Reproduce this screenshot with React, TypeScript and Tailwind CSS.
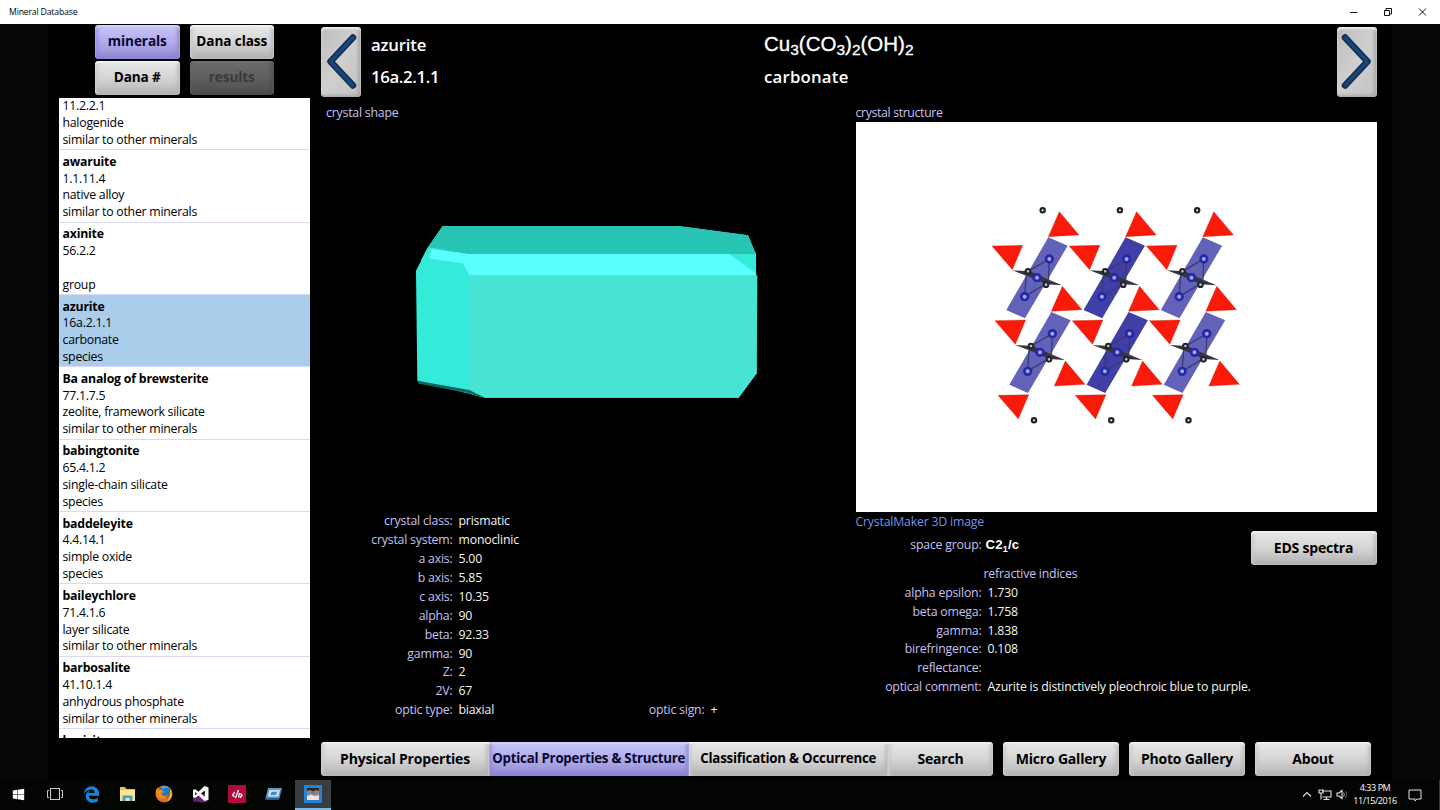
import React from 'react';
import { FaEdgeLegacy, FaWindows } from 'react-icons/fa6';

interface Mineral {
  name: string;
  dana: string;
  group: string;
  kind: string;
}

// The list is scrolled, so the first entry starts at its Dana number
const MINERALS: Mineral[] = [
  { name: '', dana: '11.2.2.1', group: 'halogenide', kind: 'similar to other minerals' },
  { name: 'awaruite', dana: '1.1.11.4', group: 'native alloy', kind: 'similar to other minerals' },
  { name: 'axinite', dana: '56.2.2', group: '', kind: 'group' },
  { name: 'azurite', dana: '16a.2.1.1', group: 'carbonate', kind: 'species' },
  { name: 'Ba analog of brewsterite', dana: '77.1.7.5', group: 'zeolite, framework silicate', kind: 'similar to other minerals' },
  { name: 'babingtonite', dana: '65.4.1.2', group: 'single-chain silicate', kind: 'species' },
  { name: 'baddeleyite', dana: '4.4.14.1', group: 'simple oxide', kind: 'species' },
  { name: 'baileychlore', dana: '71.4.1.6', group: 'layer silicate', kind: 'similar to other minerals' },
  { name: 'barbosalite', dana: '41.10.1.4', group: 'anhydrous phosphate', kind: 'similar to other minerals' },
  { name: 'baricite', dana: '', group: '', kind: '' },
];

const CRYSTAL_ROWS: [string, string][] = [
  ['crystal class:', 'prismatic'],
  ['crystal system:', 'monoclinic'],
  ['a axis:', '5.00'],
  ['b axis:', '5.85'],
  ['c axis:', '10.35'],
  ['alpha:', '90'],
  ['beta:', '92.33'],
  ['gamma:', '90'],
  ['Z:', '2'],
  ['2V:', '67'],
  ['optic type:', 'biaxial'],
];

const OPTIC_ROWS: [string, string][] = [
  ['alpha epsilon:', '1.730'],
  ['beta omega:', '1.758'],
  ['gamma:', '1.838'],
  ['birefringence:', '0.108'],
  ['reflectance:', ''],
  ['optical comment:', 'Azurite is distinctively pleochroic blue to purple.'],
];

const BUTTON_TONES = {
  normal: 'bg-linear-to-b from-[#e9e9e9] via-[#d5d5d5] to-[#b2b2b2] text-black shadow-[inset_0_2px_2px_#f4f4f4,inset_2px_0_4px_#c4c4c4,inset_-2px_-2px_4px_#adadad]',
  active: 'bg-linear-to-b from-[#c9c6f6] via-[#b0acef] to-[#908cc9] text-[#07062a] shadow-[inset_0_2px_2px_#d6d4fb,inset_2px_-2px_5px_#8c83ea,inset_-2px_-2px_4px_#8783bd]',
  disabled: 'bg-linear-to-b from-[#6c6c6c] via-[#5f5f5f] to-[#4c4c4c] text-[#3a3a3a] shadow-[inset_0_1px_2px_#757575,inset_-2px_-2px_4px_#484848]',
};

interface BevelButtonProps {
  label: string;
  tone?: keyof typeof BUTTON_TONES;
  className?: string;
}

const BevelButton: React.FC<BevelButtonProps> = ({ label, tone = 'normal', className = '' }) => (
  <button type="button" className={`flex h-[34px] items-center justify-center whitespace-nowrap pb-px font-bold ${BUTTON_TONES[tone]} ${className}`}>
    {label}
  </button>
);

const ArrowButton: React.FC<{ direction: 'left' | 'right' }> = ({ direction }) => (
  <button
    type="button"
    aria-label={direction === 'left' ? 'previous' : 'next'}
    className="h-[70px] w-10 rounded-[4px] bg-linear-to-br from-[#bdbdbd] via-[#cfcfcf] to-[#c2c2c2] shadow-[inset_0_2px_2px_#ececec,inset_-3px_-2px_3px_#a9a9a9]"
  >
    <svg viewBox="0 0 40 70" className={direction === 'left' ? 'h-full w-full' : 'h-full w-full -scale-x-100'} fill="none" strokeLinecap="round" strokeLinejoin="round">
      <path d="M32 10.500 L9.500 34.500 L32 58.500" stroke="#0f2c4d" strokeWidth="6.5" />
      <path d="M32 10.500 L9.500 34.500 L32 58.500" stroke="#194676" strokeWidth="3.5" />
    </svg>
  </button>
);

const CrystalShape = () => (
  <svg width="370" height="200" viewBox="0 0 1110 600">
    <path d="M128 48 L835 48 L1044 76 L1068 132 L1070 490 L1016 563 L255 563 L52 512 L48 182 L84 112 Z" fill="#34ebd9" />
    <path d="M128 48 L835 48 L1044 76 L1066 132 L205 132 L84 112 Z" fill="#28c5b5" />
    <path d="M94 117 L205 132 L987 132 L1068 190 L1068 196 L208 196 L188 160 L88 146 Z" fill="#59ffff" />
    <path d="M84 112 L94 117 L88 146 L62 152 Z" fill="#34ebd9" />
    <path d="M208 196 L1072 196 L1070 490 L1016 563 L255 563 L208 540 Z" fill="#47e3d5" />
    <path d="M52 512 L208 540 L255 563 L200 548 L56 521 Z" fill="#0f6660" />
  </svg>
);

const COLUMNS = [0, 1, 2];

const CrystalStructure = () => (
  <svg width="270" height="235" viewBox="0 0 810 705">
    {COLUMNS.map((col) => (
      <g key={col} transform={`translate(${col * 231.7} 0)`}>
        {[0, 1].map((row) => (
          <g key={row} transform={`translate(${row * 9} ${row * 224})`}>
            <path d="M205 127 L263 152 L135 370 L79 345 Z" fill={col === 1 ? '#3f3fa5' : '#6262b8'} />
            <path d="M97 226 L150 229 L180 243 L246 271 L198 268 L165 252 Z" fill="#34343e" />
            <path d="M144 229 L208 192 L205 262 L134 305 L139 232" fill="none" stroke="#3b3b72" strokeWidth="4" />
            {[[208, 192], [171, 248], [134, 305]].map(([x, y]) => (
              <circle key={y} cx={x} cy={y} r="10" fill="#a5a5ea" stroke="#2727a8" strokeWidth="8" />
            ))}
            {[[144, 229], [198, 269]].map(([x, y]) => (
              <circle key={y} cx={x} cy={y} r="7" fill="#bfbfbf" stroke="#22222a" strokeWidth="6" />
            ))}
          </g>
        ))}
        {[0, 1, 2].map((row) => (
          <g key={row} transform={`translate(${row * 9} ${row * 224})`} fill="#fa1a0a" stroke="#c21a10" strokeWidth="1">
            <path d="M238 50 L297 120 L205 125 Z" />
            <path d="M36 153 L128 151 L97 224 Z" />
          </g>
        ))}
        <circle cx="188" cy="46" r="6.5" fill="#eee" stroke="#222" strokeWidth="6.5" />
        <circle cx="162" cy="676" r="6.5" fill="#eee" stroke="#222" strokeWidth="6.5" />
      </g>
    ))}
  </svg>
);

const DataRow: React.FC<{ label: string; value: string }> = ({ label, value }) => (
  <div className="flex h-[18.9px] items-center gap-1.5 pt-px leading-none">
    <span className="w-[131.5px] shrink-0 whitespace-nowrap text-right text-[#c6c0f2]">{label}</span>
    <span className="whitespace-nowrap text-[#f4f4f4]">{value}</span>
  </div>
);

const MineralList = () => (
  <div className="ml-[10.5px] mt-[2.5px] h-[640.5px] w-[251.5px] overflow-hidden bg-white text-[12.3px] tracking-[-0.25px] text-black">
    <div className="-mt-[19.5px]">
      {MINERALS.map((m) => (
        <div
          key={m.dana}
          className={`h-[72.35px] border-b-[1.5px] border-[#dad8f8] pl-1 pt-[3.5px] leading-[16.8px] ${m.name === 'azurite' ? 'bg-[#abcdec]' : ''}`}
        >
          <p className="h-[16.8px] font-bold tracking-[-0.2px]">{m.name}</p>
          <p className="h-[16.8px]">{m.dana}</p>
          <p className="h-[16.8px]">{m.group}</p>
          <p className="h-[16.8px]">{m.kind}</p>
        </div>
      ))}
    </div>
  </div>
);

const FirefoxIcon = () => (
  <svg width="18" height="18" viewBox="0 0 18 18">
    <circle cx="9" cy="9" r="8.5" fill="#e66a1a" />
    <circle cx="9.2" cy="7" r="6.2" fill="#2877b8" />
    <path d="M6 1.500 C9 .2 13 1 15 4 C12 2 9 3 7.500 4 Z" fill="#57b4dc" />
    <path d="M1 5 L2.500 2.500 L4 4.500 L7 5 L9 7 L6.500 8.500 C7 11 10 12 13 10 C11 14 6 15 3 12 C1 10 .5 7 1 5 Z" fill="#f18820" />
    <path d="M15 4 C18 8 17 14 12 17 C15 13 15.500 9 15 4 Z" fill="#fbc72e" />
  </svg>
);

const ExplorerIcon = () => (
  <svg width="17" height="16" viewBox="0 0 17 16">
    <path d="M1 1 H6 L7.500 3 H16 V15 H1 Z" fill="#e8c25a" />
    <path d="M1 4 H16 V15 H1 Z" fill="#fbe58d" />
    <path d="M3.500 15 V9.500 H13.500 V15 H10.500 V12 H6.500 V15 Z" fill="#3f9fd8" />
  </svg>
);

const VisualStudioIcon = () => (
  <svg width="18" height="18" viewBox="0 0 18 18">
    <path d="M1 11 L12 9 L16.500 14 V16 L12.500 17.500 L1 16.500 Z" fill="#68217a" />
    <path d="M12.500 1 L16.500 2.500 V14.500 L12.500 16 L6.500 10.500 L3 13 L1 12 V5 L3 4 L6.500 6.700 Z M12.800 5.500 L9 8.600 L12.800 12 Z M3.200 7 V10.400 L5 8.700 Z" fill="#fff" fillRule="evenodd" />
  </svg>
);

const CodeIcon = () => (
  <svg width="18" height="18" viewBox="0 0 18 18">
    <rect width="18" height="18" fill="#b3093c" />
    <path d="M7 7 L4.500 10 L6.500 12 M10.500 5 L7.500 13 M11.500 8 L10.500 12.500 M12.500 8.500 L14 10.500 L12 12.800" fill="none" stroke="#fff" strokeWidth="1.3" />
  </svg>
);

const WindowIcon = () => (
  <svg width="17" height="14" viewBox="0 0 17 14">
    <path d="M3 1 H17 L14.500 11 H.5 Z" fill="#5b96c4" />
    <path d="M4.500 3 H15 L13.300 9.500 H2.800 Z" fill="#cbe1ef" />
    <path d="M6.500 4.800 H12 L11 8 H5.500 Z" fill="#4a86b6" />
    <path d="M.5 11 H14.500 L14 13 H.5 Z" fill="#255f91" />
  </svg>
);

const PhotoIcon = () => (
  <svg width="18" height="18" viewBox="0 0 18 18">
    <rect width="18" height="18" fill="#2581d2" />
    <rect x="3" y="3" width="12" height="12" fill="#8c8584" />
    <path d="M3 3 H15 V6 L12 5 L9 6.500 L6 5 L3 6 Z" fill="#2c2625" />
    <path d="M3 11 L7 9.500 L11 11 L15 10 V15 H3 Z" fill="#efe0dc" />
    <path d="M6.500 7 L11 7 L9 9.500 Z" fill="#96695f" />
  </svg>
);

const TaskViewIcon = () => (
  <svg width="16" height="12" viewBox="0 0 16 12" fill="none" stroke="#c8c8c8" strokeWidth="1">
    <rect x="3.500" y=".5" width="9" height="11" />
    <path d="M2 2.500 H.5 V9.500 H2 M14 2.500 H15.500 V9.500 H14" />
  </svg>
);

const TASKS = [
  <FaWindows className="h-[13px] w-[13px] text-white" />,
  <TaskViewIcon />,
  <FaEdgeLegacy className="h-[17px] w-[17px] text-[#1683dc]" />,
  <ExplorerIcon />,
  <FirefoxIcon />,
  <VisualStudioIcon />,
  <CodeIcon />,
  <WindowIcon />,
];

const Taskbar = () => (
  <footer className="flex h-[30px] items-stretch bg-[#030502] text-white">
    {TASKS.map((icon, i) => (
      <div key={i} className="mr-[0.5px] flex w-9 items-center justify-center pb-0.5">
        {icon}
      </div>
    ))}
    <div className="ml-[3px] flex w-9 items-center justify-center border-b-2 border-[#76b9ed] bg-[#3a3d3f]">
      <PhotoIcon />
    </div>
    <div className="ml-auto flex items-center">
      <svg width="46" height="14" viewBox="0 0 46 14" fill="none" stroke="#e6e6e6" strokeWidth="1.1">
        <path d="M2 8.500 L6 4.500 L10 8.500" />
        <path d="M21 3 H30 V9 H21.500 M25.500 9 V11.500 M22.500 11.500 H28.500 M18 2 H22 V5 H18 Z M20 5 V11.500" />
        <path d="M36 5 H38 L41 2.500 V10.500 L38 8 H36 Z" />
        <path d="M42.500 4.500 Q44 6.500 42.500 8.500" stroke="#999" />
        <path d="M44.500 3 Q46.500 6.500 44.500 10" stroke="#555" />
      </svg>
      <div className="ml-[5px] w-[46px] pb-[2px] text-center text-[9px] leading-[13px] tracking-[-0.45px]">
        <p>4:33 PM</p>
        <p>11/15/2016</p>
      </div>
      <svg className="ml-[10px] mr-[17px]" width="14" height="13" viewBox="0 0 14 13" fill="none" stroke="#e6e6e6">
        <path d="M1 1 H13 V10 H9 L7 12 V10 H1 Z" />
      </svg>
      <span className="h-[30px] w-px bg-[#3a3a3a]" />
    </div>
  </footer>
);

const Sub: React.FC<{ n: string }> = ({ n }) => <span className="relative top-[4px] text-[15.5px]">{n}</span>;

const App = () => (
  <div className="flex h-[810px] w-[1440px] flex-col overflow-hidden bg-[#060606] font-['Open_Sans','Noto_Sans',sans-serif] text-[12.3px] tracking-[-0.2px]">
    <header className="flex h-6 items-center bg-white pl-[9px] text-black">
      <span className="pt-px text-[8.7px] tracking-[-0.18px]">Mineral Database</span>
      <svg className="ml-auto mr-[12px]" width="80" height="12" viewBox="0 0 80 12" fill="none" stroke="#111" strokeWidth="1">
        <path d="M2 6.500 H9" />
        <path d="M36.500 4.500 H41.500 V9.500 H36.500 Z M38 4.500 V2.500 H43.500 V8 H41.500" />
        <path d="M71 2.500 L78 9.500 M78 2.500 L71 9.500" />
      </svg>
    </header>

    <main className="mx-12 flex h-[756px] bg-black">
      {/* Mineral index */}
      <aside className="w-[273px] shrink-0 pt-px">
        <div className="ml-[47px] grid w-[179px] grid-cols-2 gap-x-[10px] gap-y-0.5 text-[13.6px] tracking-[-0.1px]">
          <BevelButton label="minerals" tone="active" className="rounded-[4px]" />
          <BevelButton label="Dana class" className="rounded-[4px]" />
          <BevelButton label="Dana #" className="rounded-[4px] pb-[3px]" />
          <BevelButton label="results" tone="disabled" className="rounded-[4px] pb-[3px]" />
        </div>
        <MineralList />
      </aside>

      <section className="flex w-[1056px] flex-col">
        <div className="flex pt-[3px] text-[16.8px] font-semibold text-white">
          <ArrowButton direction="left" />
          <div className="ml-[10px] w-[393px]">
            <p className="mt-px h-[33px] leading-[33px]">azurite</p>
            <p className="h-[32px] leading-[32px] tracking-[-0.35px]">16a.2.1.1</p>
          </div>
          <div className="grow">
            <p className="mt-px h-[33px] font-['Liberation_Sans',sans-serif] text-[20.5px] font-normal leading-[32px] tracking-[0px] [-webkit-text-stroke:0.3px_white]">
              Cu<Sub n="3" />(CO<Sub n="3" />)<Sub n="2" />(OH)<Sub n="2" />
            </p>
            <p className="h-[32px] leading-[32px] tracking-[0.2px]">carbonate</p>
          </div>
          <ArrowButton direction="right" />
        </div>

        <div className="flex">
          {/* Crystal shape and cell parameters */}
          <div className="w-[534.5px]">
            <p className="ml-[5px] mt-[5px] h-5 leading-[21px] text-[#c6c0f2]">crystal shape</p>
            <div className="h-[389.5px] pl-[79px] pt-[88px]">
              <CrystalShape />
            </div>
            <div className="flex items-end">
              <div className="w-[252px]">
                {CRYSTAL_ROWS.map(([label, value]) => (
                  <DataRow key={label} label={label} value={value} />
                ))}
              </div>
              <DataRow label="optic sign:" value="+" />
            </div>
          </div>

          {/* Crystal structure and optics */}
          <div className="w-[521px]">
            <p className="mt-[5px] h-5 leading-[21px] tracking-[-0.35px] text-[#c6c0f2]">crystal structure</p>
            <div className="h-[390px] bg-white pl-[124.5px] pt-[73px]">
              <CrystalStructure />
            </div>
            <p className="h-[19px] leading-[19px] text-[#6f94ea]">CrystalMaker 3D image</p>
            <div className="flex h-[34px] items-start justify-between">
              <div className="flex pt-[5px] leading-[17px]">
                <span className="w-[126px] text-right text-[#c6c0f2]">space group:</span>
                <span className="ml-1 font-['Liberation_Sans',sans-serif] text-[13.2px] font-bold tracking-[0.2px] text-white">
                  C2<span className="relative top-[3px] text-[9px]">1</span>/c
                </span>
              </div>
              <BevelButton label="EDS spectra" className="w-[126px] rounded-[4px] text-[14px]" />
            </div>
            <p className="ml-[128px] h-[18px] leading-[18px] text-[#c6c0f2]">refractive indices</p>
            <div className="-ml-[5.5px]">
              {OPTIC_ROWS.map(([label, value]) => (
                <DataRow key={label} label={label} value={value} />
              ))}
            </div>
          </div>
        </div>

        {/* Section tabs */}
        <nav className="mb-1 mt-auto flex gap-[10px] text-[14px]">
          <div className="flex overflow-hidden rounded-[4px]">
            <BevelButton label="Physical Properties" className="w-[168px] pb-[2px]" />
            <BevelButton label="Optical Properties & Structure" tone="active" className="w-[199.5px] text-[13.3px] tracking-[-0.25px] pb-0" />
            <BevelButton label="Classification & Occurrence" className="w-[199.5px] text-[13.3px] tracking-[-0.22px] pb-0" />
            <BevelButton label="Search" className="w-[105px] pb-[2px]" />
          </div>
          <BevelButton label="Micro Gallery" className="w-[116px] rounded-[4px] pb-[2px]" />
          <BevelButton label="Photo Gallery" className="w-[116px] rounded-[4px] pb-[2px]" />
          <BevelButton label="About" className="w-[116px] rounded-[4px] pb-[2px]" />
        </nav>
      </section>
    </main>

    <Taskbar />
  </div>
);

export default App;
